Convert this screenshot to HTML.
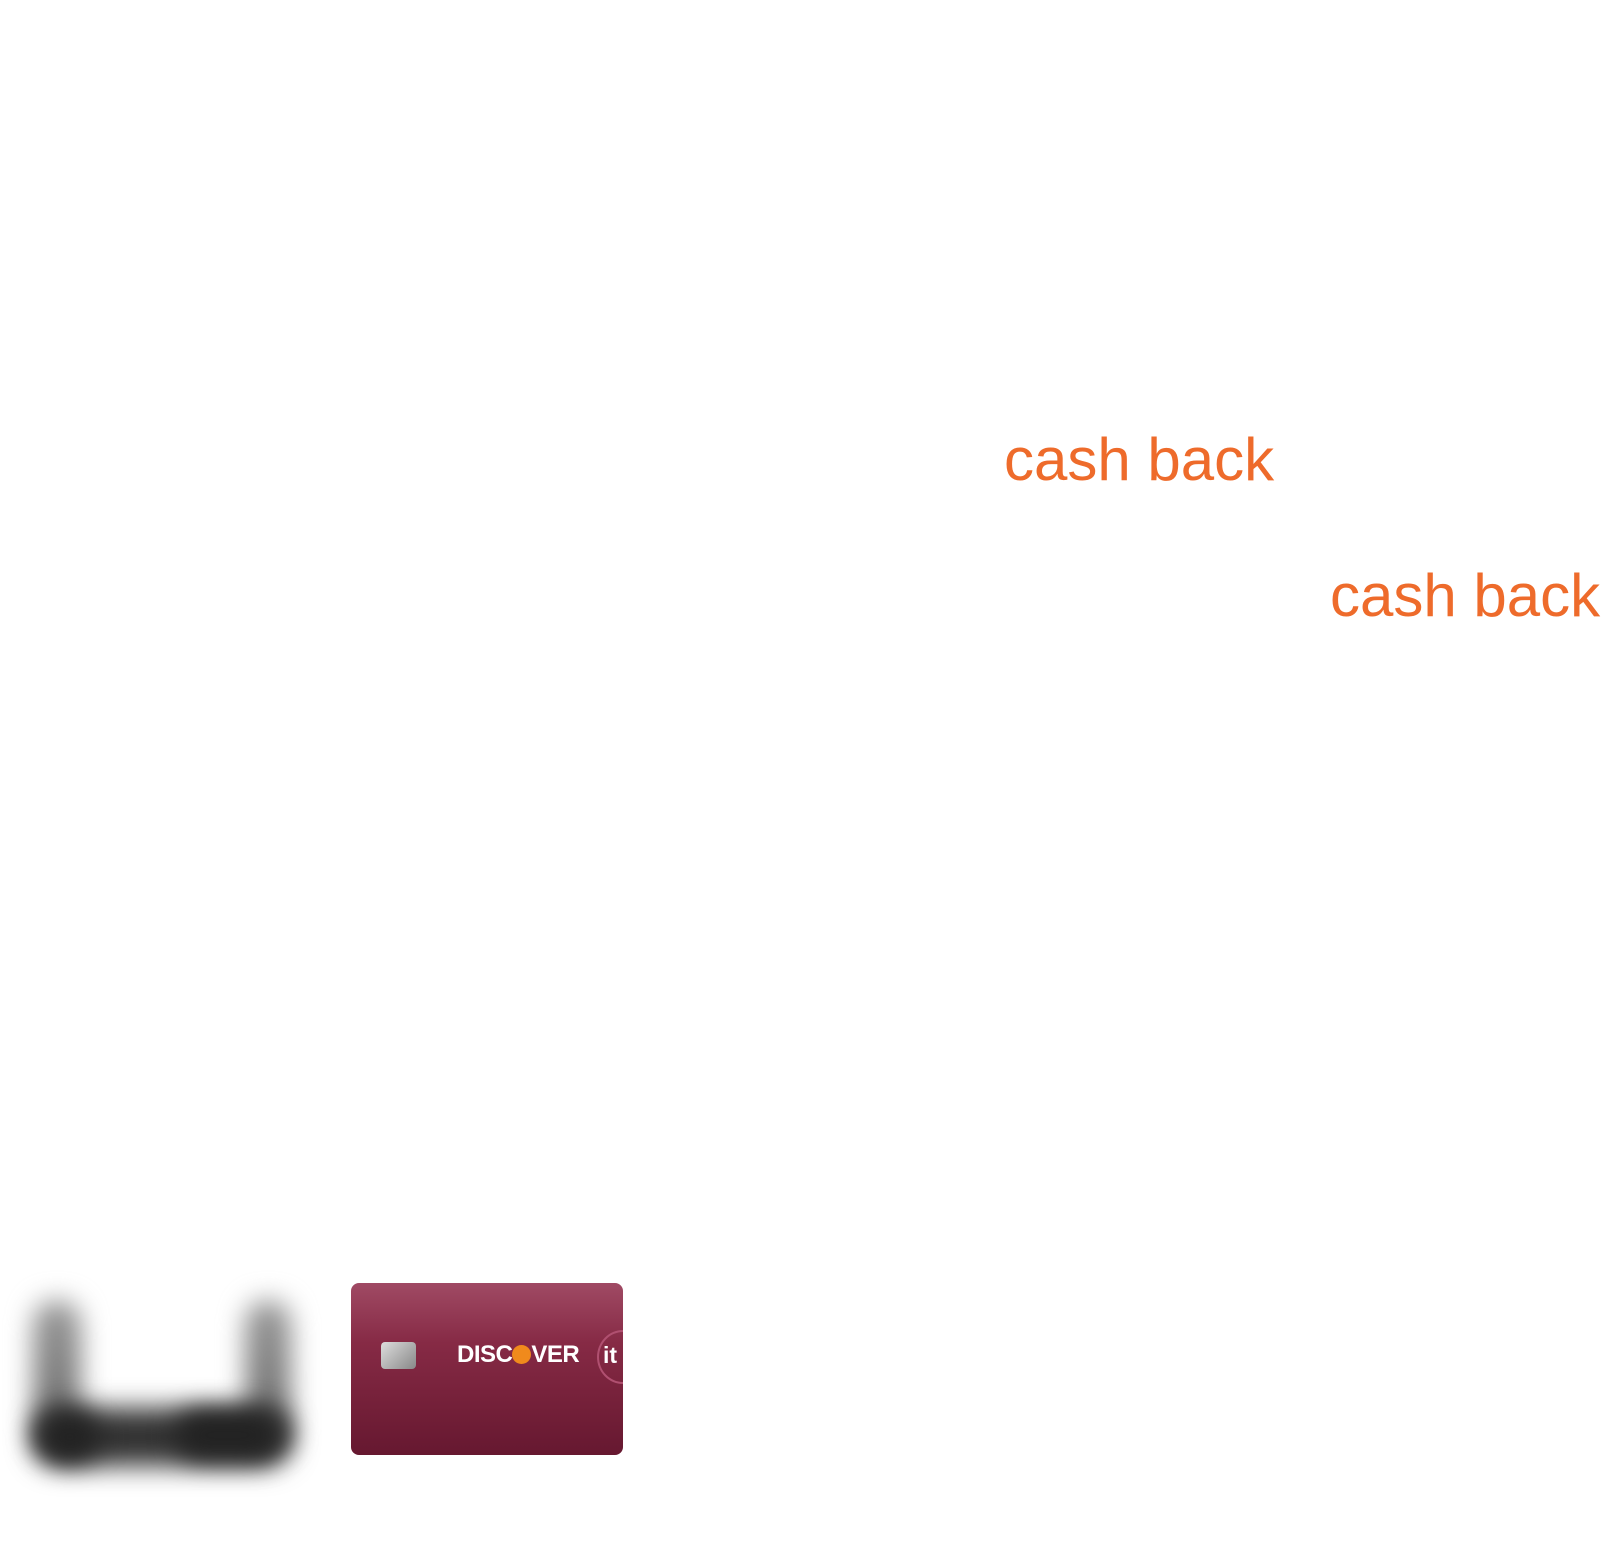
<!DOCTYPE html>
<html><head><style>
html,body{margin:0;padding:0;background:#fff;width:1624px;height:1552px;overflow:hidden;position:relative}
.t{position:absolute;font-family:"Liberation Sans",sans-serif;color:#ee6b2b;font-size:60px;line-height:1;white-space:nowrap}
.b{position:absolute;filter:blur(13px);border-radius:28px}
</style></head><body>
<div class="t" style="left:1004px;top:430px">cash back</div>
<div class="t" style="left:1330px;top:566px">cash back</div>
<div class="b" style="left:33px;top:1300px;width:48px;height:150px;background:linear-gradient(#999,#666)"></div>
<div class="b" style="left:245px;top:1300px;width:46px;height:150px;background:linear-gradient(#999,#666)"></div>
<div class="b" style="left:32px;top:1408px;width:260px;height:58px;background:#333"></div>
<div class="b" style="left:40px;top:1412px;width:60px;height:50px;background:#222"></div>
<div class="b" style="left:175px;top:1410px;width:105px;height:50px;background:#222"></div>
<div style="position:absolute;left:351px;top:1283px;width:272px;height:172px;border-radius:8px;overflow:hidden;background:linear-gradient(180deg,#a04a64 0%,#862a45 35%,#661830 100%)">
 <div style="position:absolute;left:30px;top:59px;width:35px;height:27px;border-radius:4px;background:linear-gradient(135deg,#ddd,#888)"></div>
 <div style="position:absolute;left:106px;top:58px;font-family:'Liberation Sans',sans-serif;font-weight:bold;color:#fff;font-size:24px;letter-spacing:-0.5px">DISC<span style="display:inline-block;width:19px;height:19px;border-radius:50%;background:#f08a1c;vertical-align:-2px"></span>VER</div>
 <div style="position:absolute;left:246px;top:47px;width:48px;height:50px;border-radius:50%;border:2px solid #b05070"></div>
 <div style="position:absolute;left:252px;top:59px;font-family:'Liberation Sans',sans-serif;font-weight:bold;color:#fff;font-size:23px">it</div>
</div>
</body></html>
